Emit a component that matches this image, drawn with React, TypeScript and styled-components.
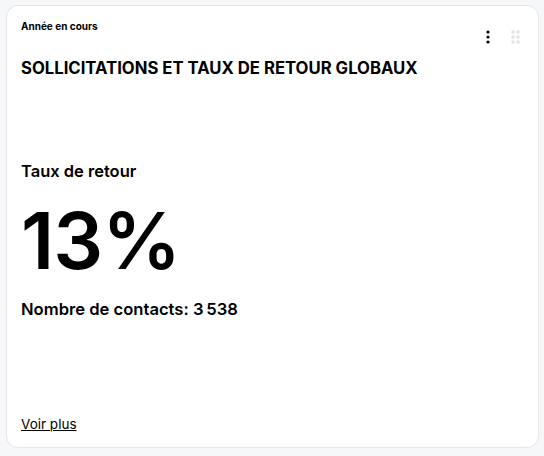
import styled, { createGlobalStyle } from 'styled-components';

const GlobalStyle = createGlobalStyle`
  html, body {
    margin: 0;
    padding: 0;
    background: #f6f7f9;
    font-family: Inter, "Liberation Sans", sans-serif;
    color: #000;
  }
  #root {
    padding: 5px 5px 0 6px;
  }
`;

const Card = styled.div`
  display: flex;
  flex-direction: column;
  box-sizing: border-box;
  width: 533px;
  height: 443px;
  background: #fff;
  border: 1px solid #e4e6ea;
  border-radius: 12px;
  padding: 12px 14px 14px 14px;
`;

const Header = styled.div`
  display: flex;
  justify-content: space-between;
  align-items: flex-start;
`;

const Period = styled.div`
  font-size: 10px;
  font-weight: 700;
  line-height: 16px;
`;

const Actions = styled.div`
  display: flex;
  gap: 21px;
  margin-top: 12px;
  margin-right: 4px;
`;

const Title = styled.h2`
  margin: 14px 0 0 0;
  font-size: 16.7px;
  font-weight: 700;
  line-height: 20px;
`;

const Body = styled.div`
  display: flex;
  flex-direction: column;
  margin-top: 82px;
  flex: 1;
`;

const Label = styled.div`
  font-size: 16.5px;
  font-weight: 600;
  line-height: 22px;
`;

const Value = styled.div`
  font-size: 78.5px;
  font-weight: 600;
  line-height: 100px;
  letter-spacing: -1px;
  margin-top: 9px;
`;

const Contacts = styled.div`
  font-size: 16.6px;
  font-weight: 600;
  line-height: 20px;
  margin-top: 8px;
`;

const More = styled.a`
  margin-top: auto;
  font-size: 13.5px;
  line-height: 18px;
  color: #000;
  text-decoration: underline;
  cursor: pointer;
  align-self: flex-start;
`;

const KebabIcon = () => (
  <svg width="4" height="14" viewBox="0 0 4 14">
    <circle cx="2" cy="2" r="1.6" fill="#000" />
    <circle cx="2" cy="7" r="1.6" fill="#000" />
    <circle cx="2" cy="12" r="1.6" fill="#000" />
  </svg>
);

const GripIcon = () => (
  <svg width="9" height="14" viewBox="0 0 9 14">
    {[2, 7, 12].map(y => (
      <g key={y}>
        <circle cx="2" cy={y} r="1.7" fill="#e2e2e2" />
        <circle cx="7" cy={y} r="1.7" fill="#e2e2e2" />
      </g>
    ))}
  </svg>
);

const App = () => {
  return (
    <>
      <GlobalStyle />
      <Card>
        <Header>
          <Period>Année en cours</Period>
          <Actions>
            <KebabIcon />
            <GripIcon />
          </Actions>
        </Header>
        <Title>SOLLICITATIONS ET TAUX DE RETOUR GLOBAUX</Title>
        <Body>
          <Label>Taux de retour</Label>
          <Value>13%</Value>
          <Contacts>Nombre de contacts: 3{'\u202F'}538</Contacts>
          <More>Voir plus</More>
        </Body>
      </Card>
    </>
  );
};

export default App;
